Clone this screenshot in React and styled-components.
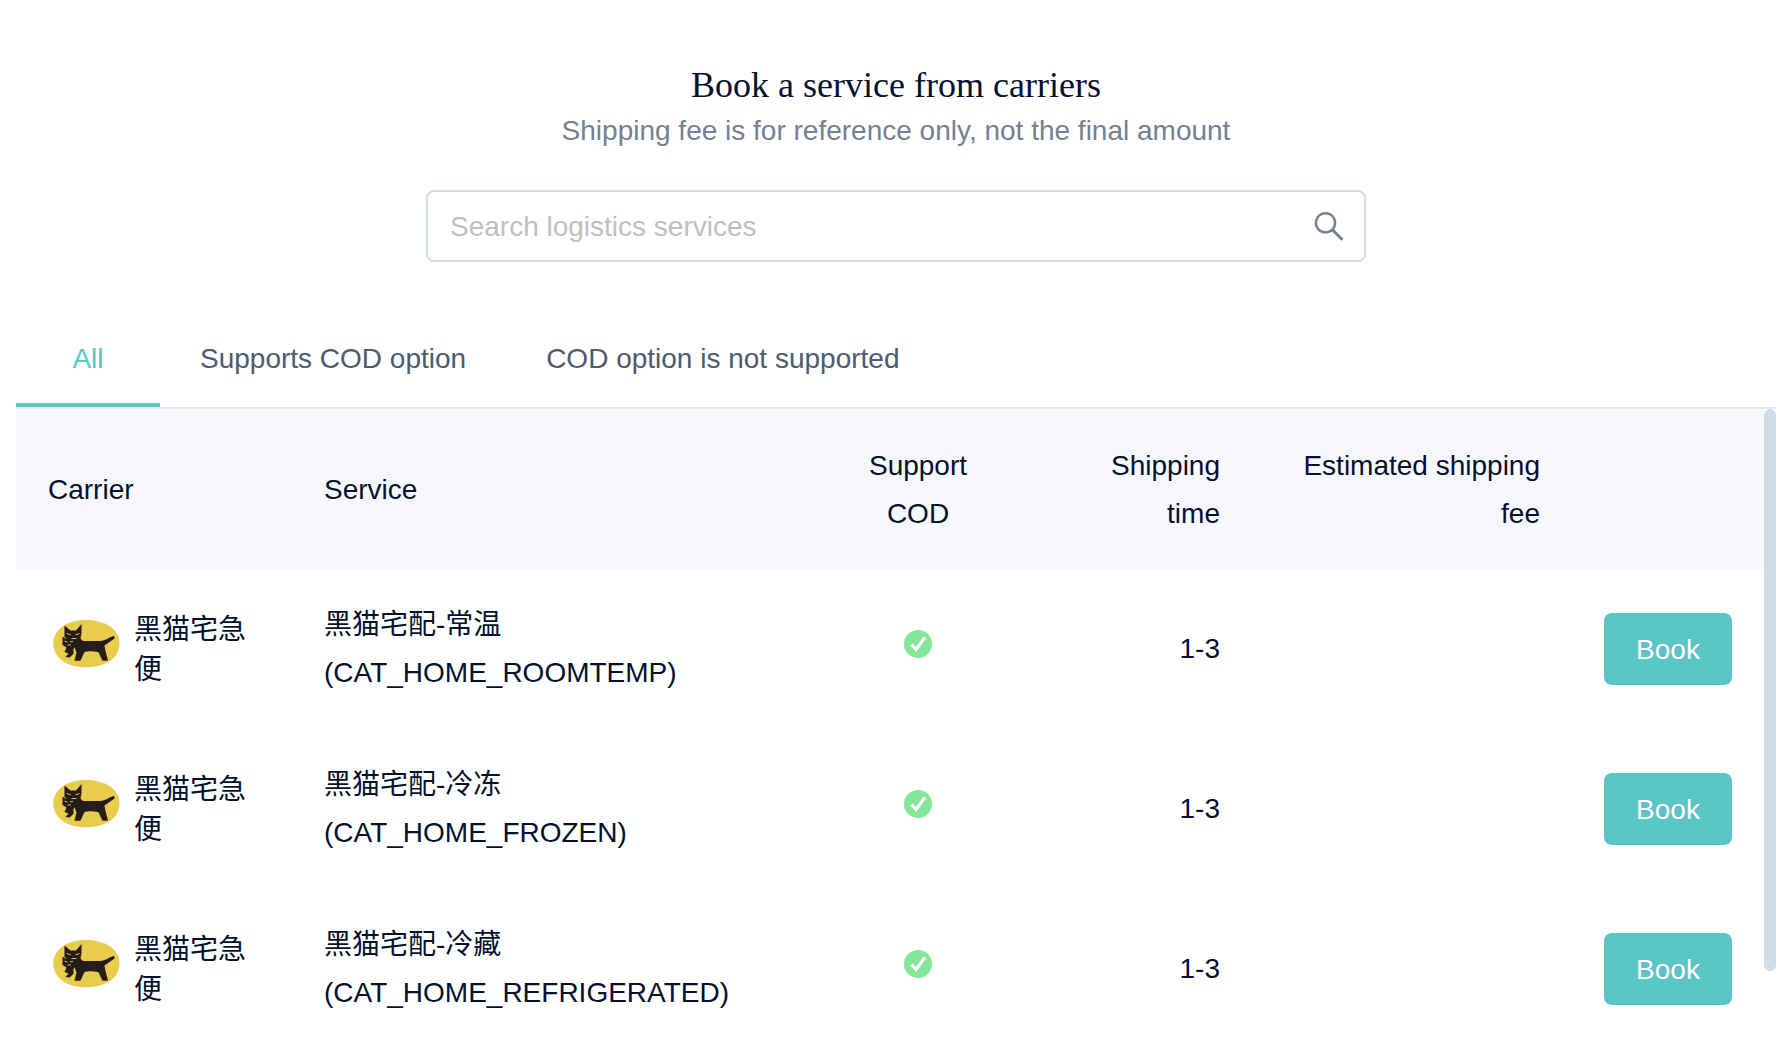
import { useState } from 'react';
import styled, { createGlobalStyle } from 'styled-components';

const TABS = [
  { key: 'all', label: 'All' },
  { key: 'cod', label: 'Supports COD option' },
  { key: 'noCod', label: 'COD option is not supported' },
];

const SERVICES = [
  {
    code: 'CAT_HOME_ROOMTEMP',
    name: '黑猫宅配-常温',
    carrier: '黑猫宅急便',
    supportCod: true,
    time: '1-3',
    fee: '',
  },
  {
    code: 'CAT_HOME_FROZEN',
    name: '黑猫宅配-冷冻',
    carrier: '黑猫宅急便',
    supportCod: true,
    time: '1-3',
    fee: '',
  },
  {
    code: 'CAT_HOME_REFRIGERATED',
    name: '黑猫宅配-冷藏',
    carrier: '黑猫宅急便',
    supportCod: true,
    time: '1-3',
    fee: '',
  },
];

function App() {
  const [tab, setTab] = useState('all');
  const [keyword, setKeyword] = useState('');

  const services = SERVICES.filter((item) => {
    if (tab === 'cod' && !item.supportCod) return false;
    if (tab === 'noCod' && item.supportCod) return false;
    return `${item.name}${item.code}${item.carrier}`
      .toLowerCase()
      .includes(keyword.toLowerCase());
  });

  return (
    <Page>
      <GlobalStyle />
      <Header>
        <Title>Book a service from carriers</Title>
        <Subtitle>
          Shipping fee is for reference only, not the final amount
        </Subtitle>
      </Header>
      <SearchBox>
        <SearchInput
          type="text"
          aria-label="Search logistics services"
          placeholder="Search logistics services"
          value={keyword}
          onChange={(e) => setKeyword(e.target.value)}
        />
        <SearchButton type="button" aria-label="Search">
          <SearchIcon />
        </SearchButton>
      </SearchBox>
      <TabBar role="tablist">
        {TABS.map(({ key, label }) => (
          <Tab
            key={key}
            type="button"
            role="tab"
            aria-selected={tab === key}
            $active={tab === key}
            onClick={() => setTab(key)}
          >
            {label}
          </Tab>
        ))}
      </TabBar>
      <TableArea>
        <Table>
          <thead>
            <tr>
              <HeadCell $width="276px">Carrier</HeadCell>
              <HeadCell>Service</HeadCell>
              <HeadCell $width="180px" $align="center">
                {'Support\nCOD'}
              </HeadCell>
              <HeadCell $width="244px" $align="right">
                {'Shipping\ntime'}
              </HeadCell>
              <HeadCell $width="320px" $align="right">
                {'Estimated shipping\nfee'}
              </HeadCell>
              <HeadCell $width="192px" aria-label="Action" />
            </tr>
          </thead>
          <tbody>
            {services.map((item) => (
              <tr key={item.code}>
                <Cell>
                  <Carrier>
                    <CatLogo />
                    <CarrierName>{item.carrier}</CarrierName>
                  </Carrier>
                </Cell>
                <Cell>
                  <div>{item.name}</div>
                  <div>({item.code})</div>
                </Cell>
                <Cell $align="center">{item.supportCod && <CheckIcon />}</Cell>
                <Cell $align="right">{item.time}</Cell>
                <Cell $align="right">{item.fee}</Cell>
                <Cell>
                  <BookButton type="button">Book</BookButton>
                </Cell>
              </tr>
            ))}
          </tbody>
        </Table>
        <ScrollTrack>
          <ScrollThumb />
        </ScrollTrack>
      </TableArea>
    </Page>
  );
}

function SearchIcon() {
  return (
    <svg width="30" height="30" viewBox="0 0 30 30" fill="none">
      <circle cx="11.5" cy="11.8" r="9.6" stroke="#748094" strokeWidth="2.4" />
      <path d="M18.2 18.5 28.4 28.7" stroke="#748094" strokeWidth="3" />
    </svg>
  );
}

function CheckIcon() {
  return (
    <svg width="28" height="28" viewBox="0 0 28 28" role="img">
      <title>Supported</title>
      <circle cx="14" cy="14" r="14" fill="#84e898" />
      <path
        d="M7.4 14.6 12.1 19.4 20.8 7.4"
        fill="none"
        stroke="#fff"
        strokeWidth="3.2"
      />
    </svg>
  );
}

function CatLogo() {
  return (
    <LogoSvg width="78" height="52" viewBox="0 0 78 52" aria-hidden="true">
      <rect width="78" height="52" fill="#fdfdfd" />
      <path
        d="M38 2C58 2 71.500 11.500 71.500 25.500C71.500 39.500 58 49.300 38 49.300C18.500 49.300 5.300 39.500 5.300 25.500C5.300 11.500 18.500 2 38 2Z"
        fill="#e8cc4e"
      />
      {/* mother cat */}
      <path
        d="M16.500 7.500 22.500 12.500H28L33.500 6V15.500L32.500 20.500 35 23H53C57 22.500 61 19.500 65.500 18C67 18.200 67 20 65.800 21L56.500 27.500L57.500 33 60 42.800H54.500L50.500 34.200C46 33 40 33 36.500 34L32.500 42.800H26.500L28.500 34.500 25.500 27 16.500 19Z"
        fill="#261c1a"
      />
      {/* kitten carried in its mouth */}
      <path
        d="M14.500 18.500 18 21H22L26.500 19 27.500 28 25.500 31 25.500 36 21.500 39.500 17.500 39 20.500 35.500 16.500 34 18.500 29.500 14.500 27Z"
        fill="#261c1a"
      />
      <path
        d="M18.500 15.500 23 16.800M31.500 15.500 27.500 16.800M23.500 20.500H28.500M16.500 23.300 19.500 24M25 23.300 22 24M19.500 27H23"
        fill="none"
        stroke="#e8cc4e"
        strokeWidth="0.9"
      />
    </LogoSvg>
  );
}

const GlobalStyle = createGlobalStyle`
  * {
    box-sizing: border-box;
  }

  body {
    margin: 0;
    background: #fff;
    color: #02112e;
    font-family: 'Liberation Sans', 'Noto Sans CJK SC', sans-serif;
    font-size: 28px;
  }

  button,
  input {
    font: inherit;
  }
`;

const Page = styled.main`
  height: 100vh;
  display: flex;
  flex-direction: column;
  padding: 60px 12px 0 16px;
  overflow: hidden;
`;

const Header = styled.header`
  text-align: center;
`;

const Title = styled.h1`
  margin: 0;
  font-family: 'Liberation Serif', serif;
  font-size: 36px;
  font-weight: 400;
  line-height: 50px;
`;

const Subtitle = styled.p`
  margin: 0;
  color: #748094;
  line-height: 42px;
`;

const SearchBox = styled.div`
  flex: none;
  align-self: center;
  width: 100%;
  max-width: 940px;
  height: 72px;
  display: flex;
  align-items: center;
  margin-top: 38px;
  padding: 0 20px 0 22px;
  border: 2px solid #d0dce9;
  border-radius: 8px;
`;

const SearchInput = styled.input`
  flex: 1;
  min-width: 0;
  padding: 2px 0 0;
  border: none;
  outline: none;
  background: transparent;
  color: inherit;

  &::placeholder {
    color: #bfbfbf;
  }
`;

const SearchButton = styled.button`
  display: flex;
  padding: 0;
  border: none;
  background: none;
  cursor: pointer;
`;

const TabBar = styled.div`
  flex: none;
  display: flex;
  margin-top: 53px;
  border-bottom: 2px solid #e8e8e8;
`;

const Tab = styled.button`
  min-width: 144px;
  padding: 24px 40px;
  border: none;
  border-bottom: 4px solid ${({ $active }) => ($active ? '#5ac5c5' : 'transparent')};
  background: none;
  color: ${({ $active }) => ($active ? '#5ac5c5' : '#4e5a70')};
  line-height: 40px;
  cursor: pointer;
`;

const TableArea = styled.div`
  flex: 1;
  min-height: 0;
  display: flex;
  overflow: hidden;
`;

const Table = styled.table`
  flex: 1;
  align-self: flex-start;
  table-layout: fixed;
  border-collapse: collapse;
  line-height: 48px;
`;

const HeadCell = styled.th`
  width: ${({ $width }) => $width || 'auto'};
  height: 160px;
  padding: 2px 32px 0;
  background: #f7f8fc;
  font-weight: 400;
  text-align: ${({ $align }) => $align || 'left'};
  white-space: pre-line;
`;

const Cell = styled.td`
  height: 160px;
  padding: 0 32px;
  text-align: ${({ $align }) => $align || 'left'};
`;

const Carrier = styled.div`
  display: flex;
  align-items: center;
  gap: 8px;
`;

const LogoSvg = styled.svg`
  flex: none;
  margin-bottom: 10px;
`;

const CarrierName = styled.span`
  padding-top: 2px;
  line-height: 40px;
`;

const BookButton = styled.button`
  width: 128px;
  height: 72px;
  display: block;
  padding: 2px 0 0;
  border: none;
  border-radius: 8px;
  background: #5ac5c5;
  color: #fff;
  cursor: pointer;
`;

const ScrollTrack = styled.div`
  flex: none;
  width: 12px;
`;

const ScrollThumb = styled.div`
  height: 89%;
  border-radius: 6px;
  background: #d0dce9;
`;

export default App;
